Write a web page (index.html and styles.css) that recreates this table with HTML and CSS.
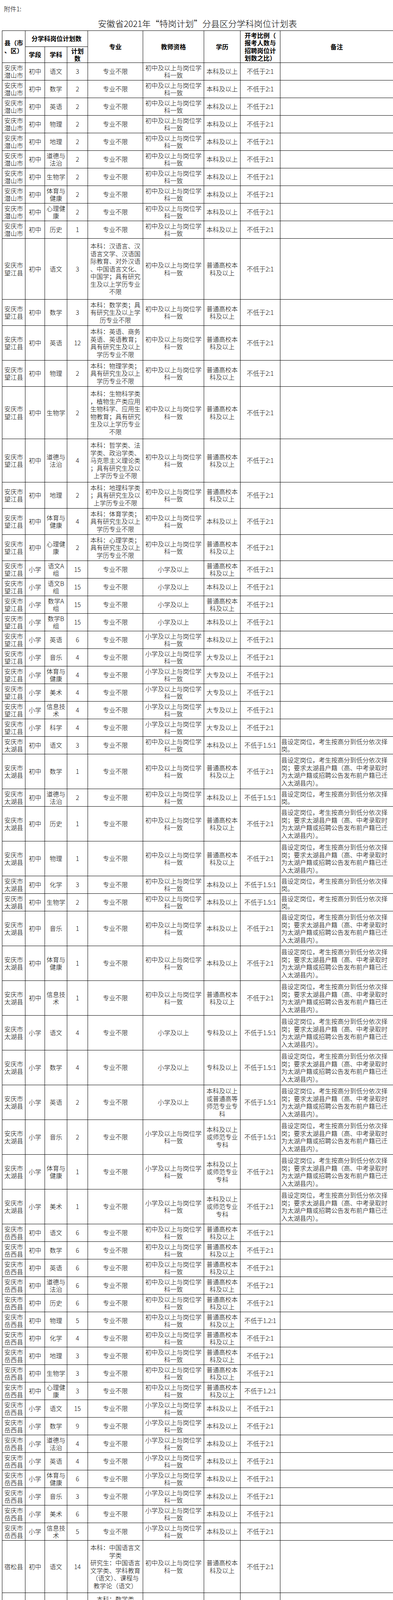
FILE: index.html
```html
<!DOCTYPE html>
<html lang="zh-CN">
<head>
<meta charset="utf-8">
<title>安徽省2021年“特岗计划”分县区分学科岗位计划表</title>
<link rel="stylesheet" href="styles.css">
</head>
<body>
<div class="doc">
<p class="attach">附件1:</p>
<div class="sheet">
<h1 class="title">安徽省2021年“特岗计划”分县区分学科岗位计划表</h1>
<table class="plan">
<colgroup>
<col class="c-cty"><col class="c-lvl"><col class="c-sub"><col class="c-num"><col class="c-maj"><col class="c-qua"><col class="c-edu"><col class="c-rat"><col class="c-rem">
</colgroup>
<thead>
<tr class="hr">
<th rowspan="2">县（市<br>、区）</th>
<th colspan="3">分学科岗位计划数</th>
<th rowspan="2">专业</th>
<th rowspan="2">教师资格</th>
<th rowspan="2">学历</th>
<th rowspan="2">开考比例（<br>报考人数与<br>招聘岗位计<br>划数之比）</th>
<th rowspan="2">备注</th>
</tr>
<tr class="hr">
<th>学段</th><th>学科</th><th>计划<br>数</th>
</tr>
</thead>
<tbody>
<!-- 潜山市 -->
<tr class="n2"><td>安庆市<br>潜山市</td><td>初中</td><td>语文</td><td>3</td><td>专业不限</td><td>初中及以上与岗位学<br>科一致</td><td>本科及以上</td><td>不低于2:1</td><td></td></tr>
<tr class="n2"><td>安庆市<br>潜山市</td><td>初中</td><td>数学</td><td>2</td><td>专业不限</td><td>初中及以上与岗位学<br>科一致</td><td>本科及以上</td><td>不低于2:1</td><td></td></tr>
<tr class="n2"><td>安庆市<br>潜山市</td><td>初中</td><td>英语</td><td>2</td><td>专业不限</td><td>初中及以上与岗位学<br>科一致</td><td>本科及以上</td><td>不低于2:1</td><td></td></tr>
<tr class="n2"><td>安庆市<br>潜山市</td><td>初中</td><td>物理</td><td>2</td><td>专业不限</td><td>初中及以上与岗位学<br>科一致</td><td>本科及以上</td><td>不低于2:1</td><td></td></tr>
<tr class="n2"><td>安庆市<br>潜山市</td><td>初中</td><td>地理</td><td>2</td><td>专业不限</td><td>初中及以上与岗位学<br>科一致</td><td>本科及以上</td><td>不低于2:1</td><td></td></tr>
<tr class="n2"><td>安庆市<br>潜山市</td><td>初中</td><td>道德与<br>法治</td><td>2</td><td>专业不限</td><td>初中及以上与岗位学<br>科一致</td><td>本科及以上</td><td>不低于2:1</td><td></td></tr>
<tr class="n2"><td>安庆市<br>潜山市</td><td>初中</td><td>生物学</td><td>2</td><td>专业不限</td><td>初中及以上与岗位学<br>科一致</td><td>本科及以上</td><td>不低于2:1</td><td></td></tr>
<tr class="n2"><td>安庆市<br>潜山市</td><td>初中</td><td>体育与<br>健康</td><td>2</td><td>专业不限</td><td>初中及以上与岗位学<br>科一致</td><td>本科及以上</td><td>不低于2:1</td><td></td></tr>
<tr class="n2"><td>安庆市<br>潜山市</td><td>初中</td><td>心理健<br>康</td><td>2</td><td>专业不限</td><td>初中及以上与岗位学<br>科一致</td><td>本科及以上</td><td>不低于2:1</td><td></td></tr>
<tr class="n2"><td>安庆市<br>潜山市</td><td>初中</td><td>历史</td><td>1</td><td>专业不限</td><td>初中及以上与岗位学<br>科一致</td><td>本科及以上</td><td>不低于2:1</td><td></td></tr>
<!-- 望江县 -->
<tr class="n7"><td>安庆市<br>望江县</td><td>初中</td><td>语文</td><td>3</td><td>本科：汉语言、汉<br>语言文学、汉语国<br>际教育、对外汉语<br>、中国语言文化、<br>中国学；具有研究<br>生及以上学历专业<br>不限</td><td>初中及以上与岗位学<br>科一致</td><td>普通高校本<br>科及以上</td><td>不低于2:1</td><td></td></tr>
<tr class="n3"><td>安庆市<br>望江县</td><td>初中</td><td>数学</td><td>3</td><td>本科：数学类；具<br>有研究生及以上学<br>历专业不限</td><td>初中及以上与岗位学<br>科一致</td><td>普通高校本<br>科及以上</td><td>不低于2:1</td><td></td></tr>
<tr class="n4"><td>安庆市<br>望江县</td><td>初中</td><td>英语</td><td>12</td><td>本科：英语、商务<br>英语、英语教育；<br>具有研究生及以上<br>学历专业不限</td><td>初中及以上与岗位学<br>科一致</td><td>普通高校本<br>科及以上</td><td>不低于2:1</td><td></td></tr>
<tr class="n3"><td>安庆市<br>望江县</td><td>初中</td><td>物理</td><td>2</td><td>本科：物理学类；<br>具有研究生及以上<br>学历专业不限</td><td>初中及以上与岗位学<br>科一致</td><td>普通高校本<br>科及以上</td><td>不低于2:1</td><td></td></tr>
<tr class="n6"><td>安庆市<br>望江县</td><td>初中</td><td>生物学</td><td>2</td><td>本科：生物科学类<br>，植物生产类应用<br>生物科学、应用生<br>物教育；具有研究<br>生及以上学历专业<br>不限</td><td>初中及以上与岗位学<br>科一致</td><td>普通高校本<br>科及以上</td><td>不低于2:1</td><td></td></tr>
<tr class="n5"><td>安庆市<br>望江县</td><td>初中</td><td>道德与<br>法治</td><td>4</td><td>本科：哲学类、法<br>学类、政治学类、<br>马克思主义理论类<br>；具有研究生及以<br>上学历专业不限</td><td>初中及以上与岗位学<br>科一致</td><td>普通高校本<br>科及以上</td><td>不低于2:1</td><td></td></tr>
<tr class="n3"><td>安庆市<br>望江县</td><td>初中</td><td>地理</td><td>2</td><td>本科：地理科学类<br>；具有研究生及以<br>上学历专业不限</td><td>初中及以上与岗位学<br>科一致</td><td>普通高校本<br>科及以上</td><td>不低于2:1</td><td></td></tr>
<tr class="n3"><td>安庆市<br>望江县</td><td>初中</td><td>体育与<br>健康</td><td>4</td><td>本科：体育学类；<br>具有研究生及以上<br>学历专业不限</td><td>初中及以上与岗位学<br>科一致</td><td>本科及以上</td><td>不低于2:1</td><td></td></tr>
<tr class="n3"><td>安庆市<br>望江县</td><td>初中</td><td>心理健<br>康</td><td>2</td><td>本科：心理学类；<br>具有研究生及以上<br>学历专业不限</td><td>初中及以上与岗位学<br>科一致</td><td>普通高校本<br>科及以上</td><td>不低于2:1</td><td></td></tr>
<tr class="n2"><td>安庆市<br>望江县</td><td>小学</td><td>语文A<br>组</td><td>15</td><td>专业不限</td><td>小学及以上</td><td>普通高校本<br>科及以上</td><td>不低于2:1</td><td></td></tr>
<tr class="n2"><td>安庆市<br>望江县</td><td>小学</td><td>语文B<br>组</td><td>15</td><td>专业不限</td><td>小学及以上</td><td>本科及以上</td><td>不低于2:1</td><td></td></tr>
<tr class="n2"><td>安庆市<br>望江县</td><td>小学</td><td>数学A<br>组</td><td>15</td><td>专业不限</td><td>小学及以上</td><td>普通高校本<br>科及以上</td><td>不低于2:1</td><td></td></tr>
<tr class="n2"><td>安庆市<br>望江县</td><td>小学</td><td>数学B<br>组</td><td>15</td><td>专业不限</td><td>小学及以上</td><td>本科及以上</td><td>不低于2:1</td><td></td></tr>
<tr class="n2"><td>安庆市<br>望江县</td><td>小学</td><td>英语</td><td>6</td><td>专业不限</td><td>小学及以上与岗位学<br>科一致</td><td>本科及以上</td><td>不低于2:1</td><td></td></tr>
<tr class="n2"><td>安庆市<br>望江县</td><td>小学</td><td>音乐</td><td>4</td><td>专业不限</td><td>小学及以上与岗位学<br>科一致</td><td>大专及以上</td><td>不低于2:1</td><td></td></tr>
<tr class="n2"><td>安庆市<br>望江县</td><td>小学</td><td>体育与<br>健康</td><td>4</td><td>专业不限</td><td>小学及以上与岗位学<br>科一致</td><td>大专及以上</td><td>不低于2:1</td><td></td></tr>
<tr class="n2"><td>安庆市<br>望江县</td><td>小学</td><td>美术</td><td>4</td><td>专业不限</td><td>小学及以上与岗位学<br>科一致</td><td>大专及以上</td><td>不低于2:1</td><td></td></tr>
<tr class="n2"><td>安庆市<br>望江县</td><td>小学</td><td>信息技<br>术</td><td>4</td><td>专业不限</td><td>小学及以上与岗位学<br>科一致</td><td>大专及以上</td><td>不低于2:1</td><td></td></tr>
<tr class="n2"><td>安庆市<br>望江县</td><td>小学</td><td>科学</td><td>4</td><td>专业不限</td><td>小学及以上与岗位学<br>科一致</td><td>大专及以上</td><td>不低于2:1</td><td></td></tr>
<!-- 太湖县 -->
<tr class="n2"><td>安庆市<br>太湖县</td><td>初中</td><td>语文</td><td>3</td><td>专业不限</td><td>初中及以上与岗位学<br>科一致</td><td>本科及以上</td><td>不低于1.5:1</td><td class="rm">县设定岗位，考生按高分到低分依次择<br>岗。</td></tr>
<tr class="n4"><td>安庆市<br>太湖县</td><td>初中</td><td>数学</td><td>1</td><td>专业不限</td><td>初中及以上与岗位学<br>科一致</td><td>普通高校本<br>科及以上</td><td>不低于2:1</td><td class="rm">县设定岗位，考生按高分到低分依次择<br>岗；要求太湖县户籍（高、中考录取时<br>为太湖户籍或招聘公告发布前户籍已迁<br>入太湖县内）。</td></tr>
<tr class="n2"><td>安庆市<br>太湖县</td><td>初中</td><td>道德与<br>法治</td><td>2</td><td>专业不限</td><td>初中及以上与岗位学<br>科一致</td><td>本科及以上</td><td>不低于1.5:1</td><td class="rm">县设定岗位，考生按高分到低分依次择<br>岗。</td></tr>
<tr class="n4"><td>安庆市<br>太湖县</td><td>初中</td><td>历史</td><td>1</td><td>专业不限</td><td>初中及以上与岗位学<br>科一致</td><td>普通高校本<br>科及以上</td><td>不低于2:1</td><td class="rm">县设定岗位，考生按高分到低分依次择<br>岗；要求太湖县户籍（高、中考录取时<br>为太湖户籍或招聘公告发布前户籍已迁<br>入太湖县内）。</td></tr>
<tr class="n4"><td>安庆市<br>太湖县</td><td>初中</td><td>物理</td><td>1</td><td>专业不限</td><td>初中及以上与岗位学<br>科一致</td><td>普通高校本<br>科及以上</td><td>不低于2:1</td><td class="rm">县设定岗位，考生按高分到低分依次择<br>岗；要求太湖县户籍（高、中考录取时<br>为太湖户籍或招聘公告发布前户籍已迁<br>入太湖县内）。</td></tr>
<tr class="n2"><td>安庆市<br>太湖县</td><td>初中</td><td>化学</td><td>3</td><td>专业不限</td><td>初中及以上与岗位学<br>科一致</td><td>本科及以上</td><td>不低于1.5:1</td><td class="rm">县设定岗位，考生按高分到低分依次择<br>岗。</td></tr>
<tr class="n2"><td>安庆市<br>太湖县</td><td>初中</td><td>生物学</td><td>2</td><td>专业不限</td><td>初中及以上与岗位学<br>科一致</td><td>本科及以上</td><td>不低于1.5:1</td><td class="rm">县设定岗位，考生按高分到低分依次择<br>岗。</td></tr>
<tr class="n4"><td>安庆市<br>太湖县</td><td>初中</td><td>音乐</td><td>1</td><td>专业不限</td><td>初中及以上与岗位学<br>科一致</td><td>本科及以上</td><td>不低于2:1</td><td class="rm">县设定岗位，考生按高分到低分依次择<br>岗；要求太湖县户籍（高、中考录取时<br>为太湖户籍或招聘公告发布前户籍已迁<br>入太湖县内）。</td></tr>
<tr class="n4"><td>安庆市<br>太湖县</td><td>初中</td><td>体育与<br>健康</td><td>1</td><td>专业不限</td><td>初中及以上与岗位学<br>科一致</td><td>本科及以上</td><td>不低于2:1</td><td class="rm">县设定岗位，考生按高分到低分依次择<br>岗；要求太湖县户籍（高、中考录取时<br>为太湖户籍或招聘公告发布前户籍已迁<br>入太湖县内）。</td></tr>
<tr class="n4"><td>安庆市<br>太湖县</td><td>初中</td><td>信息技<br>术</td><td>1</td><td>专业不限</td><td>初中及以上与岗位学<br>科一致</td><td>普通高校本<br>科及以上</td><td>不低于2:1</td><td class="rm">县设定岗位，考生按高分到低分依次择<br>岗；要求太湖县户籍（高、中考录取时<br>为太湖户籍或招聘公告发布前户籍已迁<br>入太湖县内）。</td></tr>
<tr class="n4"><td>安庆市<br>太湖县</td><td>小学</td><td>语文</td><td>4</td><td>专业不限</td><td>小学及以上</td><td>专科及以上</td><td>不低于1.5:1</td><td class="rm">县设定岗位，考生按高分到低分依次择<br>岗；要求太湖县户籍（高、中考录取时<br>为太湖户籍或招聘公告发布前户籍已迁<br>入太湖县内）。</td></tr>
<tr class="n4"><td>安庆市<br>太湖县</td><td>小学</td><td>数学</td><td>4</td><td>专业不限</td><td>小学及以上</td><td>专科及以上</td><td>不低于1.5:1</td><td class="rm">县设定岗位，考生按高分到低分依次择<br>岗；要求太湖县户籍（高、中考录取时<br>为太湖户籍或招聘公告发布前户籍已迁<br>入太湖县内）。</td></tr>
<tr class="n4"><td>安庆市<br>太湖县</td><td>小学</td><td>英语</td><td>2</td><td>专业不限</td><td>小学及以上</td><td>本科及以上<br>或普通高等<br>师范专业专<br>科</td><td>不低于1.5:1</td><td class="rm">县设定岗位，考生按高分到低分依次择<br>岗；要求太湖县户籍（高、中考录取时<br>为太湖户籍或招聘公告发布前户籍已迁<br>入太湖县内）。</td></tr>
<tr class="n4"><td>安庆市<br>太湖县</td><td>小学</td><td>音乐</td><td>2</td><td>专业不限</td><td>小学及以上与岗位学<br>科一致</td><td>本科及以上<br>或师范专业<br>专科</td><td>不低于1.5:1</td><td class="rm">县设定岗位，考生按高分到低分依次择<br>岗；要求太湖县户籍（高、中考录取时<br>为太湖户籍或招聘公告发布前户籍已迁<br>入太湖县内）。</td></tr>
<tr class="n4"><td>安庆市<br>太湖县</td><td>小学</td><td>体育与<br>健康</td><td>1</td><td>专业不限</td><td>小学及以上与岗位学<br>科一致</td><td>本科及以上<br>或师范专业<br>专科</td><td>不低于2:1</td><td class="rm">县设定岗位，考生按高分到低分依次择<br>岗；要求太湖县户籍（高、中考录取时<br>为太湖户籍或招聘公告发布前户籍已迁<br>入太湖县内）。</td></tr>
<tr class="n4"><td>安庆市<br>太湖县</td><td>小学</td><td>美术</td><td>1</td><td>专业不限</td><td>小学及以上与岗位学<br>科一致</td><td>本科及以上<br>或师范专业<br>专科</td><td>不低于2:1</td><td class="rm">县设定岗位，考生按高分到低分依次择<br>岗；要求太湖县户籍（高、中考录取时<br>为太湖户籍或招聘公告发布前户籍已迁<br>入太湖县内）。</td></tr>
<!-- 岳西县 -->
<tr class="n2"><td>安庆市<br>岳西县</td><td>初中</td><td>语文</td><td>6</td><td>专业不限</td><td>初中及以上与岗位学<br>科一致</td><td>普通高校本<br>科及以上</td><td>不低于2:1</td><td></td></tr>
<tr class="n2"><td>安庆市<br>岳西县</td><td>初中</td><td>数学</td><td>6</td><td>专业不限</td><td>初中及以上与岗位学<br>科一致</td><td>普通高校本<br>科及以上</td><td>不低于2:1</td><td></td></tr>
<tr class="n2"><td>安庆市<br>岳西县</td><td>初中</td><td>英语</td><td>6</td><td>专业不限</td><td>初中及以上与岗位学<br>科一致</td><td>普通高校本<br>科及以上</td><td>不低于2:1</td><td></td></tr>
<tr class="n2"><td>安庆市<br>岳西县</td><td>初中</td><td>道德与<br>法治</td><td>6</td><td>专业不限</td><td>初中及以上与岗位学<br>科一致</td><td>普通高校本<br>科及以上</td><td>不低于2:1</td><td></td></tr>
<tr class="n2"><td>安庆市<br>岳西县</td><td>初中</td><td>历史</td><td>6</td><td>专业不限</td><td>初中及以上与岗位学<br>科一致</td><td>普通高校本<br>科及以上</td><td>不低于2:1</td><td></td></tr>
<tr class="n2"><td>安庆市<br>岳西县</td><td>初中</td><td>物理</td><td>5</td><td>专业不限</td><td>初中及以上与岗位学<br>科一致</td><td>普通高校本<br>科及以上</td><td>不低于1.2:1</td><td></td></tr>
<tr class="n2"><td>安庆市<br>岳西县</td><td>初中</td><td>化学</td><td>4</td><td>专业不限</td><td>初中及以上与岗位学<br>科一致</td><td>普通高校本<br>科及以上</td><td>不低于2:1</td><td></td></tr>
<tr class="n2"><td>安庆市<br>岳西县</td><td>初中</td><td>地理</td><td>3</td><td>专业不限</td><td>初中及以上与岗位学<br>科一致</td><td>普通高校本<br>科及以上</td><td>不低于2:1</td><td></td></tr>
<tr class="n2"><td>安庆市<br>岳西县</td><td>初中</td><td>生物学</td><td>3</td><td>专业不限</td><td>初中及以上与岗位学<br>科一致</td><td>普通高校本<br>科及以上</td><td>不低于2:1</td><td></td></tr>
<tr class="n2"><td>安庆市<br>岳西县</td><td>初中</td><td>心理健<br>康</td><td>3</td><td>专业不限</td><td>初中及以上与岗位学<br>科一致</td><td>普通高校本<br>科及以上</td><td>不低于1.2:1</td><td></td></tr>
<tr class="n2"><td>安庆市<br>岳西县</td><td>小学</td><td>语文</td><td>15</td><td>专业不限</td><td>小学及以上与岗位学<br>科一致</td><td>本科及以上</td><td>不低于2:1</td><td></td></tr>
<tr class="n2"><td>安庆市<br>岳西县</td><td>小学</td><td>数学</td><td>9</td><td>专业不限</td><td>小学及以上与岗位学<br>科一致</td><td>本科及以上</td><td>不低于2:1</td><td></td></tr>
<tr class="n2"><td>安庆市<br>岳西县</td><td>小学</td><td>道德与<br>法治</td><td>4</td><td>专业不限</td><td>小学及以上与岗位学<br>科一致</td><td>本科及以上</td><td>不低于2:1</td><td></td></tr>
<tr class="n2"><td>安庆市<br>岳西县</td><td>小学</td><td>英语</td><td>4</td><td>专业不限</td><td>小学及以上与岗位学<br>科一致</td><td>本科及以上</td><td>不低于2:1</td><td></td></tr>
<tr class="n2"><td>安庆市<br>岳西县</td><td>小学</td><td>体育与<br>健康</td><td>6</td><td>专业不限</td><td>小学及以上与岗位学<br>科一致</td><td>本科及以上</td><td>不低于2:1</td><td></td></tr>
<tr class="n2"><td>安庆市<br>岳西县</td><td>小学</td><td>音乐</td><td>3</td><td>专业不限</td><td>小学及以上与岗位学<br>科一致</td><td>本科及以上</td><td>不低于2:1</td><td></td></tr>
<tr class="n2"><td>安庆市<br>岳西县</td><td>小学</td><td>美术</td><td>6</td><td>专业不限</td><td>小学及以上与岗位学<br>科一致</td><td>本科及以上</td><td>不低于2:1</td><td></td></tr>
<tr class="n2"><td>安庆市<br>岳西县</td><td>小学</td><td>信息技<br>术</td><td>5</td><td>专业不限</td><td>小学及以上与岗位学<br>科一致</td><td>本科及以上</td><td>不低于2:1</td><td></td></tr>
<!-- 宿松县 -->
<tr class="n6"><td>宿松县</td><td>初中</td><td>语文</td><td>14</td><td>本科：中国语言文<br>学类<br>研究生：中国语言<br>文学类、学科教育<br>（语文）、课程与<br>教学论（语文）</td><td>初中及以上与岗位学<br>科一致</td><td>普通高校本<br>科及以上</td><td>不低于2:1</td><td></td></tr>
<tr class="n5"><td>宿松县</td><td>初中</td><td>数学</td><td>14</td><td>本科：数学类<br>研究生：数学类、<br>学科教育（数学）<br>、课程与教学论（<br>数学）</td><td>初中及以上与岗位学<br>科一致</td><td>普通高校本<br>科及以上</td><td>不低于2:1</td><td></td></tr>
<tr class="n6"><td>宿松县</td><td>初中</td><td>英语</td><td>14</td><td>本科：外国语言文<br>学类<br>研究生：外国语言<br>文学类、学科教育<br>（英语）、课程与<br>教学论（外语）</td><td>初中及以上与岗位学<br>科一致</td><td>普通高校本<br>科及以上</td><td>不低于2:1</td><td></td></tr>
<tr class="n2"><td>宿松县</td><td>初中</td><td>物理</td><td>6</td><td>专业不限</td><td>初中及以上与岗位学<br>科一致</td><td>普通高校本<br>科及以上</td><td>不低于2:1</td><td></td></tr>
<tr class="n5"><td>宿松县</td><td>初中</td><td>化学</td><td>5</td><td>本科：化学类<br>研究生：化学类、<br>学科教育（化学）<br>、课程与教学论（<br>化学）</td><td>初中及以上与岗位学<br>科一致</td><td>普通高校本<br>科及以上</td><td>不低于2:1</td><td></td></tr>
<tr class="n2"><td>宿松县</td><td>初中</td><td>道德与<br>法治</td><td>5</td><td>专业不限</td><td>初中及以上与岗位学<br>科一致</td><td>普通高校本<br>科及以上</td><td>不低于2:1</td><td></td></tr>
<tr class="n5"><td>宿松县</td><td>初中</td><td>历史</td><td>4</td><td>本科：历史学类<br>研究生：历史学类<br>、学科教育（历史<br>）、课程与教学论<br>（历史）</td><td>初中及以上与岗位学<br>科一致</td><td>普通高校本<br>科及以上</td><td>不低于2:1</td><td></td></tr>
<tr class="n5"><td>宿松县</td><td>初中</td><td>地理</td><td>2</td><td>本科：地理科学类<br>研究生：地理科学<br>类、学科教育（地<br>理）、课程与教学<br>论（地理）</td><td>初中及以上与岗位学<br>科一致</td><td>普通高校本<br>科及以上</td><td>不低于2:1</td><td></td></tr>
<tr class="n5"><td>宿松县</td><td>初中</td><td>生物学</td><td>2</td><td>本科：生物科学类<br>研究生：生物科学<br>类、学科教育（生<br>物）、课程与教学<br>论（生物）</td><td>初中及以上与岗位学<br>科一致</td><td>普通高校本<br>科及以上</td><td>不低于2:1</td><td></td></tr>
<tr class="n5"><td>宿松县</td><td>初中</td><td>音乐</td><td>4</td><td>本科：艺术学门类<br>研究生：艺术学类<br>、学科教育（音乐<br>）、课程与教学论<br>（音乐）</td><td>初中及以上与岗位学<br>科一致</td><td>普通高校本<br>科及以上</td><td>不低于2:1</td><td></td></tr>
<tr class="n5"><td>宿松县</td><td>初中</td><td>美术</td><td>4</td><td>本科：艺术学门类<br>研究生：艺术学类<br>、学科教育（美术<br>）、课程与教学论<br>（美术）</td><td>初中及以上与岗位学<br>科一致</td><td>普通高校本<br>科及以上</td><td>不低于2:1</td><td></td></tr>
<tr class="n5"><td>宿松县</td><td>初中</td><td>体育与<br>健康</td><td>4</td><td>本科：体育学类<br>研究生：体育学类<br>、学科教育（体育<br>）、课程与教学论<br>（体育）</td><td>初中及以上与岗位学<br>科一致</td><td>普通高校本<br>科及以上</td><td>不低于2:1</td><td></td></tr>
<tr class="n9"><td>宿松县</td><td>初中</td><td>信息技<br>术</td><td>2</td><td>本科：计算机类、<br>电子信息类、教育<br>技术学专业<br>研究生：计算机科<br>学与技术类、教育<br>技术学专业、学科<br>教育（信息技术）<br>、课程与教学论（<br>信息技术）</td><td>初中及以上与岗位学<br>科一致</td><td>普通高校本<br>科及以上</td><td>不低于2:1</td><td></td></tr>
<tr class="n4"><td>宿松县</td><td>小学</td><td>语文</td><td>30</td><td>专科：小学教育、<br>语文教育<br>本科及以上：专业<br>不限。</td><td>小学及以上与岗位学<br>科一致</td><td>师范专业专<br>科及以上</td><td>不低于2:1</td><td>教师资格条件：小学全科教师资格证可<br>报考。</td></tr>
<tr class="n4"><td>宿松县</td><td>小学</td><td>数学</td><td>30</td><td>专科：小学教育、<br>数学教育<br>本科及以上：专业<br>不限。</td><td>小学及以上与岗位学<br>科一致</td><td>师范专业专<br>科及以上</td><td>不低于2:1</td><td>教师资格条件：小学全科教师资格证可<br>报考。</td></tr>
<tr class="n7"><td>宿松县</td><td>小学</td><td>英语</td><td>18</td><td>专科：英语教育<br>本科：外国语言文<br>学类<br>研究生：外国语言<br>文学类、学科教育<br>（英语）、课程与<br>教学论（外语）</td><td>小学及以上与岗位学<br>科一致</td><td>师范专业专<br>科及以上</td><td>不低于2:1</td><td>教师资格条件：小学全科教师资格证可<br>报考。</td></tr>
<tr class="n3"><td>宿松县</td><td>小学</td><td>道德与<br>法治</td><td>3</td><td>专科：师范专业<br>本科及以上：专业<br>不限。</td><td>小学及以上与岗位学<br>科一致</td><td>师范专业专<br>科及以上</td><td>不低于2:1</td><td>教师资格条件：小学全科教师资格证可<br>报考。</td></tr>
<tr class="n8"><td>宿松县</td><td>小学</td><td>音乐</td><td>12</td><td>专科：音乐教育、<br>舞蹈教育、艺术教<br>育<br>本科：艺术学门类<br>研究生：艺术学类<br>、学科教育（音乐<br>）、课程与教学论<br>（音乐）</td><td>小学及以上与岗位学<br>科一致</td><td>师范专业专<br>科及以上</td><td>不低于2:1</td><td>教师资格条件：小学全科教师资格证可<br>报考。</td></tr>
<tr class="n7"><td>宿松县</td><td>小学</td><td>美术</td><td>12</td><td>专科：美术教育、<br>艺术教育<br>本科：艺术学门类<br>研究生：艺术学类<br>、学科教育（美术<br>）、课程与教学论<br>（美术）</td><td>小学及以上与岗位学<br>科一致</td><td>师范专业专<br>科及以上</td><td>不低于2:1</td><td>教师资格条件：小学全科教师资格证可<br>报考。</td></tr>
<tr class="n6"><td>宿松县</td><td>小学</td><td>体育与<br>健康</td><td>9</td><td>专科：体育教育<br>本科：体育学类<br>研究生：体育学类<br>、学科教育（体育<br>）、课程与教学论<br>（体育）</td><td>小学及以上与岗位学<br>科一致</td><td>师范专业专<br>科及以上</td><td>不低于2:1</td><td>教师资格条件：小学全科教师资格证可<br>报考。</td></tr>
<tr class="n10"><td>宿松县</td><td>小学</td><td>信息技<br>术</td><td>4</td><td>专科：计算机教育<br>本科：计算机类、<br>电子信息类、教育<br>技术学专业<br>研究生：计算机科<br>学与技术类、教育<br>技术学专业、学科<br>教育（信息技术）<br>、课程与教学论（<br>信息技术）</td><td>小学及以上与岗位学<br>科一致</td><td>师范专业专<br>科及以上</td><td>不低于2:1</td><td>教师资格条件：小学全科教师资格证可<br>报考。</td></tr>
<tr class="n4"><td>宿松县</td><td>小学</td><td>心理健<br>康</td><td>2</td><td>专科：心理健康教<br>育<br>本科及以上：专业<br>不限。</td><td>小学及以上与岗位学<br>科一致</td><td>师范专业专<br>科及以上</td><td>不低于2:1</td><td>教师资格条件：小学全科教师资格证可<br>报考。</td></tr>
</tbody>
</table>
</div>
</div>
</body>
</html>
```
FILE: styles.css
```css
html, body {
  margin: 0;
  padding: 0;
  background: #fff;
}

body {
  font-family: "Noto Sans CJK SC", "Noto Sans", sans-serif;
  color: #000;
}

.doc {
  padding-top: 12px;
}

.attach {
  margin: 0 0 0 10px;
  font-size: 16px;
  line-height: 20px;
  font-weight: 300;
}

.sheet {
  margin-left: 5px;
  width: 1000px;
}

.title {
  margin: 12px 0 0;
  text-align: center;
  font-size: 22px;
  line-height: 30px;
  font-weight: 300;
}

.plan {
  margin-top: 4px;
  width: 1000px;
  border-collapse: collapse;
  table-layout: fixed;
  font-size: 16px;
  line-height: 19.5px;
  font-weight: 300;
}

.c-cty { width: 59px; }
.c-lvl { width: 50px; }
.c-sub { width: 57px; }
.c-num { width: 53px; }
.c-maj { width: 141px; }
.c-qua { width: 156px; }
.c-edu { width: 93px; }
.c-rat { width: 102px; }
.c-rem { width: 289px; }

.plan th,
.plan td {
  border: 1px solid #000;
  padding: 0 2px;
  text-align: center;
  vertical-align: middle;
  white-space: nowrap;
}

.plan th {
  font-weight: 700;
}

.plan td.rm {
  text-align: left;
}

.hr { height: 41px; }
.n2 { height: 45px; }
.n3 { height: 67px; }
.n4 { height: 89px; }
.n5 { height: 111px; }
.n6 { height: 134px; }
.n7 { height: 156px; }
.n8 { height: 178px; }
.n9 { height: 201px; }
.n10 { height: 223px; }
```
